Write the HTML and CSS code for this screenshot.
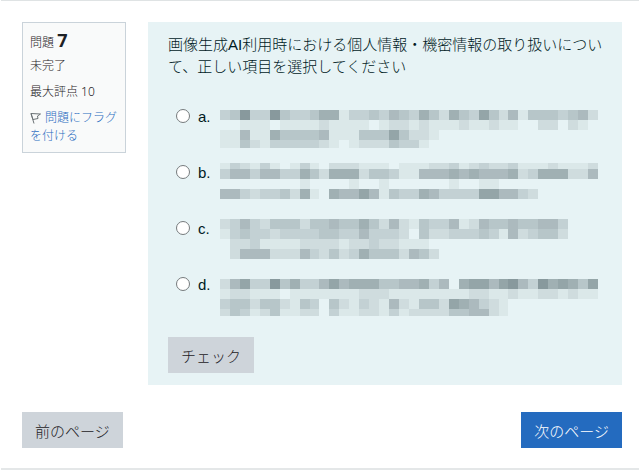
FILE: index.html
```html
<!DOCTYPE html>
<html lang="ja">
<head>
    <meta charset="UTF-8">
    <meta name="viewport" content="width=device-width, initial-scale=1.0">
    <title>問題 7</title>
    <link rel="stylesheet" href="styles.css">
</head>
<body>
    <form class="quiz">
        <div class="question">
            <aside class="info">
                <h3 class="number">問題 <span class="qno">7</span></h3>
                <p class="state">未完了</p>
                <p class="grade">最大評点 10</p>
                <a class="flag" href="#"><svg class="flag-icon" viewBox="0 0 12 12" width="12" height="12"><path d="M1 1.5 L10.5 2 L7.5 4 L8 6.5 L3 7.5 Z M1 1.5 L4 11.5" fill="none" stroke="#6b7275" stroke-width="1"/></svg> 問題にフラグを付ける</a>
            </aside>
            <div class="content">
                <p class="qtext">画像生成AI利用時における個人情報・機密情報の取り扱いについて、正しい項目を選択してください</p>
                <ul class="answers">
                    <li class="answer">
                        <input type="radio" name="answer" id="answer-a">
                        <label for="answer-a">a.</label>
                        <svg class="mosaic" data-answer="a"></svg>
                    </li>
                    <li class="answer">
                        <input type="radio" name="answer" id="answer-b">
                        <label for="answer-b">b.</label>
                        <svg class="mosaic" data-answer="b"></svg>
                    </li>
                    <li class="answer">
                        <input type="radio" name="answer" id="answer-c">
                        <label for="answer-c">c.</label>
                        <svg class="mosaic" data-answer="c"></svg>
                    </li>
                    <li class="answer">
                        <input type="radio" name="answer" id="answer-d">
                        <label for="answer-d">d.</label>
                        <svg class="mosaic" data-answer="d"></svg>
                    </li>
                </ul>
                <button type="button" class="btn">チェック</button>
            </div>
        </div>
        <div class="nav">
            <button type="button" class="btn">前のページ</button>
            <button type="button" class="btn btn-primary">次のページ</button>
        </div>
    </form>
    <script src="script.js"></script>
</body>
</html>
```

FILE: styles.css
```css
body {
    margin: 0;
    background-color: #fff;
    color: #1d2125;
    font-family: "Liberation Sans", "Noto Sans CJK JP", sans-serif;
    font-size: 15px;
    font-weight: 300;
}
.quiz {
    margin: 0 1px;
    padding: 21px 17px 20px 21px;
    border-top: 1px solid #dfe3e4;
    border-bottom: 2px solid #e4e7e8;
}
.question {
    display: flex;
    align-items: flex-start;
    gap: 22px;
}
.info {
    box-sizing: border-box;
    flex: none;
    width: 104px;
    padding: 7px;
    border: 1px solid #cad3da;
    background-color: #f9fafa;
    font-family: "Noto Sans", "Noto Sans CJK JP", sans-serif;
    font-size: 12px;
    line-height: 18px;
}
.number {
    margin: 0 0 4px;
    font-size: 12px;
    font-weight: 300;
    line-height: 20px;
}
.qno {
    font-size: 18px;
    font-weight: bold;
}
.state,
.grade {
    margin: 0 0 8px;
}
.flag {
    display: block;
    color: #2a6cc0;
    text-decoration: none;
}
.flag-icon {
    vertical-align: -2px;
}
.content {
    flex: 1;
    min-width: 0;
    padding: 12px 16px 12px 20px;
    background-color: #e7f3f5;
    color: #001a1e;
}
.qtext {
    margin: 0;
    line-height: 22px;
}
.answers {
    display: grid;
    gap: 15px;
    margin: 29px 0 21px;
    padding: 0;
    list-style: none;
}
.answer {
    display: grid;
    grid-template-columns: 22px 22px 1fr;
    align-items: start;
    padding: 0 8px;
    line-height: 20px;
}
.answer input {
    appearance: none;
    box-sizing: border-box;
    width: 14px;
    height: 14px;
    margin: 2px 0;
    border: 1px solid #767b7d;
    border-radius: 50%;
    background-color: #fff;
}
.answer input:checked {
    background-color: #266cc0;
}
.mosaic {
    display: block;
    width: 100%;
    height: 41px;
}
.btn {
    height: 36px;
    padding: 0 13px;
    border: none;
    background-color: #ced4da;
    color: #1d2125;
    font-family: inherit;
    font-size: 15px;
    font-weight: 300;
    cursor: pointer;
}
.btn-primary {
    background-color: #246bbf;
    color: #fff;
}
.nav {
    display: flex;
    justify-content: space-between;
    margin-top: 27px;
}
```

FILE: script.js
```js
// each row: [height, shade of every block from 0 (clear) to 9 (dark)]
const mosaics = {
    a: [
        [3,  '00000000000000000000000000000000000000'],
        [10, '34833843346613343543642643742514443452'],
        [10, '00111011112111101221211121121100220210'],
        [10, '11511644445111444742210000000000000000'],
        [8,  '11421333332101222433100000000000000000']
    ],
    b: [
        [6,  '13213101310222111011122312322311121112'],
        [10, '35535533642666244311555656555623666225'],
        [10, '00000000100001001000000100110000000000'],
        [10, '55323342610655751433653333775532000000'],
        [3,  '00000000000000000000000000000000000000']
    ],
    c: [
        [10, '23532444244544642521433512544544553000'],
        [10, '13433233334433533320422333431523442000'],
        [10, '02231111222212232211100000000000000000'],
        [10, '02555222532423644425420000000000000000'],
        [1,  '00000000000000000000000000000000000000']
    ],
    d: [
        [4,  '00000000000000000000000000000000000000'],
        [10, '25733846335756664455635067757853867647'],
        [10, '12211101111111222111111112211211221211'],
        [10, '34424421430421321521442765321000000000'],
        [7,  '24312411220311221312222445521000000000']
    ]
};

document.querySelectorAll('.mosaic').forEach(svg => {
    let y = 0;
    let blocks = '';
    mosaics[svg.dataset.answer].forEach(([height, shades]) => {
        [...shades].forEach((shade, i) => {
            if (shade !== '0') {
                blocks += `<rect x="${i * 10}" y="${y}" width="10" height="${height}" fill="#64767c" fill-opacity="${shade * 0.09}"/>`;
            }
        });
        y += height;
    });
    svg.setAttribute('viewBox', '0 0 380 41');
    svg.setAttribute('preserveAspectRatio', 'none');
    svg.setAttribute('shape-rendering', 'crispEdges');
    svg.innerHTML = blocks;
});
```
